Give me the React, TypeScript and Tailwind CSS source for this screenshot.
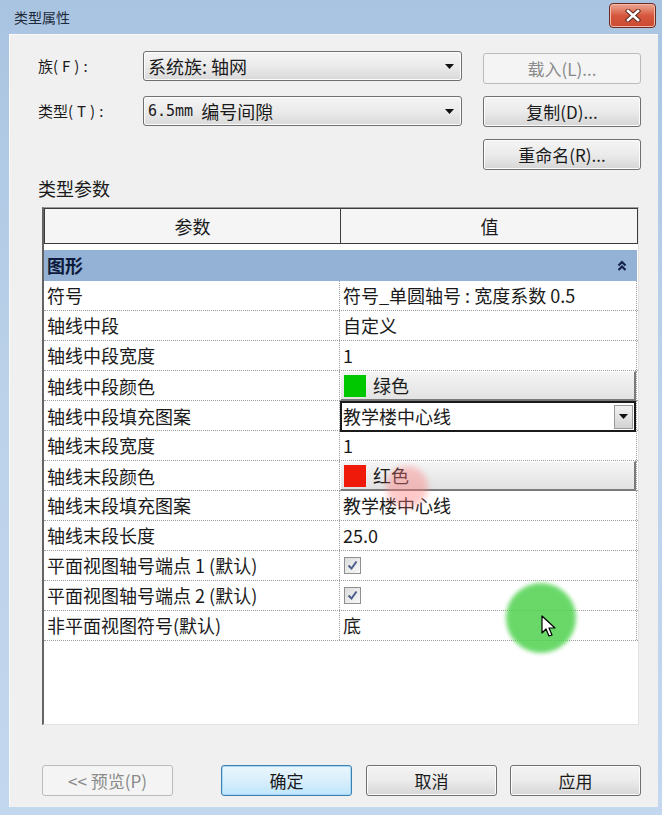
import React from 'react';

const FONT = { fontFamily: '"Noto Sans CJK SC", "Noto Sans", sans-serif' };

interface Row {
  name: string;
  kind: 'text' | 'color' | 'select' | 'check';
  value?: string;
  swatch?: string;
}

const rows: Row[] = [
  { name: '符号', kind: 'text', value: '符号_单圆轴号 : 宽度系数 0.5' },
  { name: '轴线中段', kind: 'text', value: '自定义' },
  { name: '轴线中段宽度', kind: 'text', value: '1' },
  { name: '轴线中段颜色', kind: 'color', value: '绿色', swatch: '#00c800' },
  { name: '轴线中段填充图案', kind: 'select', value: '教学楼中心线' },
  { name: '轴线末段宽度', kind: 'text', value: '1' },
  { name: '轴线末段颜色', kind: 'color', value: '红色', swatch: '#f01a0a' },
  { name: '轴线末段填充图案', kind: 'text', value: '教学楼中心线' },
  { name: '轴线末段长度', kind: 'text', value: '25.0' },
  { name: '平面视图轴号端点 1 (默认)', kind: 'check' },
  { name: '平面视图轴号端点 2 (默认)', kind: 'check' },
  { name: '非平面视图符号(默认)', kind: 'text', value: '底' },
];

const Arrow = () => (
  <svg width="9" height="5" viewBox="0 0 9 5">
    <polygon points="0,0 9,0 4.5,5" fill="#111" />
  </svg>
);

const WinButton = ({ label, disabled, focused, className = '' }: { label: React.ReactNode; disabled?: boolean; focused?: boolean; className?: string }) => (
  <div
    className={`h-[31px] rounded-[3px] border flex items-center justify-center text-[17px] ${
      disabled
        ? 'border-[#b8bcbf] bg-[#f4f4f4] text-[#8a8a8a]'
        : focused
        ? 'border-[#3c7fb1] bg-gradient-to-b from-[#eaf6fd] via-[#d9eefb] to-[#bee6fd] text-[#1a1a1a] shadow-[inset_0_0_0_1px_#a6d9f6]'
        : 'border-[#707070] bg-gradient-to-b from-[#f4f4f4] via-[#ebebeb] to-[#d6d6d6] text-[#1a1a1a] shadow-[inset_0_0_0_1px_#fcfcfc]'
    } ${className}`}
  >
    {label}
  </div>
);

const Combo = ({ children }: { children: React.ReactNode }) => (
  <div className="w-[319px] h-[30px] rounded-[3px] border border-[#707070] bg-gradient-to-b from-[#f4f4f4] via-[#ebebeb] to-[#d9d9d9] shadow-[inset_0_0_0_1px_#fcfcfc] flex items-center justify-between pl-[4px] pr-[7px] text-[18px] text-[#1a1a1a]">
    <span className="flex items-center">{children}</span>
    <Arrow />
  </div>
);

const Check = () => (
  <div className="w-[17px] h-[17px] border border-[#8e8f8f] bg-gradient-to-br from-[#dcdcdc] to-[#f8f8f8] flex items-center justify-center">
    <svg width="11" height="11" viewBox="0 0 11 11">
      <path d="M1.5 5.5 L4.5 8.5 L9.5 1.5" fill="none" stroke="#4d5d8c" strokeWidth="2" />
    </svg>
  </div>
);

const ValueCell = ({ row }: { row: Row }) => {
  if (row.kind === 'color') {
    return (
      <div className="h-full flex items-center bg-gradient-to-b from-[#f5f5f5] to-[#e2e2e2] border-t border-l border-t-white border-l-white border-r-2 border-b-2 border-r-[#7a7a7a] border-b-[#7a7a7a]">
        <div className="w-[22px] h-[22px] ml-[3px]" style={{ backgroundColor: row.swatch }} />
        <span className="ml-[7px]">{row.value}</span>
      </div>
    );
  }
  if (row.kind === 'select') {
    return (
      <div className="h-full flex items-center justify-between bg-white border-2 border-[#1a1a1a]">
        <span className="pl-[1px]">{row.value}</span>
        <div className="w-[19px] h-[24px] mr-[1px] bg-gradient-to-b from-[#f2f2f2] to-[#d2d2d2] border border-[#9a9a9a] flex items-center justify-center">
          <Arrow />
        </div>
      </div>
    );
  }
  if (row.kind === 'check') {
    return (
      <div className="h-full flex items-center pl-[4px]">
        <Check />
      </div>
    );
  }
  return <div className="h-full flex items-center pl-[3px]">{row.value}</div>;
};

export default function App() {
  return (
    <div className="relative w-[662px] h-[815px] flex flex-col bg-gradient-to-b from-[#a9c4e1] via-[#bcd2ea] to-[#c3d7ee] overflow-hidden" style={FONT}>
      {/* title bar */}
      <div className="h-[34px] flex items-center justify-between pl-[14px] pr-[6px]">
        <span className="text-[14px] text-[#1e2a3a]">类型属性</span>
        <div className="w-[47px] h-[25px] -mt-[3px] rounded-[4px] border border-[#6e2b22] bg-gradient-to-b from-[#eba893] via-[#d6573f] to-[#c94a30] flex items-center justify-center shadow-[inset_0_0_0_1px_#f0b9a8]">
          <svg width="16" height="13" viewBox="0 0 16 13">
            <path d="M3 2 L13 11 M13 2 L3 11" stroke="#5a2a22" strokeWidth="4.5" strokeLinecap="square" />
            <path d="M3 2 L13 11 M13 2 L3 11" stroke="#ffffff" strokeWidth="2.6" strokeLinecap="square" />
          </svg>
        </div>
      </div>

      {/* content */}
      <div className="flex-1 ml-[9px] mr-[4px] mb-[8px] bg-[#f0f0f0] border-t border-l border-[#fafafa] flex flex-col text-[#1a1a1a]">
        <div className="flex pt-[16px] pl-[28px]">
          <div className="flex flex-col gap-[15px]">
            <div className="h-[30px] flex items-center">
              <span className="w-[105px] text-[15px]">族<span className="tracking-[4px]">(F):</span></span>
              <Combo>系统族: 轴网</Combo>
            </div>
            <div className="h-[30px] flex items-center">
              <span className="w-[105px] text-[15px]">类型<span className="tracking-[4px]">(T):</span></span>
              <Combo>
                <span className="text-[15px] mr-[8px]" style={{ fontFamily: '"DejaVu Sans Mono", monospace' }}>6.5mm</span>
                编号间隙
              </Combo>
            </div>
          </div>
          <div className="ml-[21px] pt-[2px] flex flex-col gap-[12px]">
            <WinButton label="载入(L)..." disabled className="w-[158px] h-[30px]" />
            <WinButton label="复制(D)..." className="w-[158px]" />
            <WinButton label="重命名(R)..." className="w-[158px]" />
          </div>
        </div>

        <div className="mt-[7px] pl-[28px] text-[18px] leading-[22px]">类型参数</div>

        {/* parameter table */}
        <div className="mt-[8px] ml-[32px] w-[597px] h-[518px] bg-white border-l-2 border-l-[#646464] border-t border-t-[#9a9a9a] border-r border-r-[#e2e2e2] border-b border-b-[#e2e2e2] text-[18px]">
          <div className="grid grid-cols-[296px_297px] h-[36px] bg-[#f5f5f5] border border-[#3c3c3c]">
            <div className="flex items-center justify-center border-r border-[#3c3c3c]">参数</div>
            <div className="flex items-center justify-center">值</div>
          </div>
          <div className="h-[6px]" />
          <div className="w-[593px] h-[31px] bg-[#94b2d6] flex items-center justify-between pl-[3px] pr-[10px]">
            <span className="font-bold text-[#0f1b3c]">图形</span>
            <svg width="10" height="12" viewBox="0 0 10 12">
              <path d="M1.5 5.5 L5 2 L8.5 5.5 M1.5 10 L5 6.5 L8.5 10" fill="none" stroke="#15234a" strokeWidth="2.2" />
            </svg>
          </div>
          {rows.map((row) => (
            <div key={row.name} className="grid grid-cols-[296px_297px] h-[30px] border-b border-dotted border-[#9c9c9c]">
              <div className="flex items-center pl-[3px] border-r border-dotted border-[#9c9c9c] whitespace-nowrap">{row.name}</div>
              <div className="border-r border-dotted border-[#9c9c9c] whitespace-nowrap">
                <ValueCell row={row} />
              </div>
            </div>
          ))}
        </div>

        {/* dialog buttons */}
        <div className="mt-[40px] ml-[32px] flex items-center">
          <WinButton label="<< 预览(P)" disabled className="w-[131px]" />
          <WinButton label="确定" focused className="w-[131px] ml-[48px]" />
          <WinButton label="取消" className="w-[131px] ml-[14px]" />
          <WinButton label="应用" className="w-[131px] ml-[13px]" />
        </div>
      </div>

      {/* click highlights & pointer */}
      <div className="absolute left-[386px] top-[466px] w-[42px] h-[42px] rounded-full bg-[#ff7a7a] opacity-40 blur-[3px]" />
      <div className="absolute left-[506px] top-[583px] w-[70px] h-[70px] rounded-full bg-[#4fd24f] opacity-85 blur-[2px]" />
      <svg className="absolute left-[541px] top-[615px]" width="16" height="24" viewBox="0 0 16 24">
        <path d="M1 1 L1 18 L5 14 L8 21 L11 20 L8 13 L14 13 Z" fill="#ffffff" stroke="#000000" strokeWidth="1.2" strokeLinejoin="round" />
      </svg>
    </div>
  );
}
